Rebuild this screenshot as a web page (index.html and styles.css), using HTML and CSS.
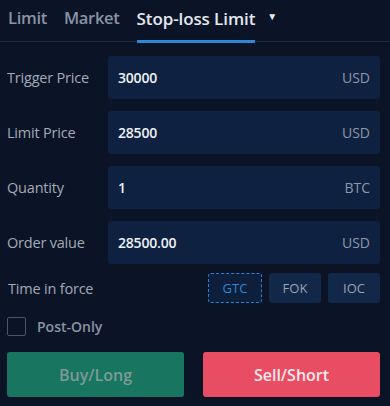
FILE: index.html
```html
<!DOCTYPE html>
<html lang="en">
<head>
    <meta charset="UTF-8">
    <meta name="viewport" content="width=device-width, initial-scale=1.0">
    <title>Stop-loss Limit Order</title>
    <link rel="stylesheet" href="styles.css">
</head>
<body>
    <nav class="tabs">
        <a href="#" class="tab">Limit</a>
        <a href="#" class="tab">Market</a>
        <a href="#" class="tab active">Stop-loss Limit</a>
        <span class="caret">&#9660;</span>
    </nav>

    <form class="order-form">
        <div class="form-row">
            <label>Trigger Price</label>
            <div class="field"><span class="value">30000</span><span class="unit">USD</span></div>
        </div>
        <div class="form-row">
            <label>Limit Price</label>
            <div class="field"><span class="value">28500</span><span class="unit">USD</span></div>
        </div>
        <div class="form-row">
            <label>Quantity</label>
            <div class="field"><span class="value">1</span><span class="unit">BTC</span></div>
        </div>
        <div class="form-row">
            <label>Order value</label>
            <div class="field"><span class="value">28500.00</span><span class="unit">USD</span></div>
        </div>

        <div class="tif-row">
            <span class="tif-label">Time in force</span>
            <div class="tif-options">
                <button type="button" class="tif-btn selected">GTC</button>
                <button type="button" class="tif-btn">FOK</button>
                <button type="button" class="tif-btn">IOC</button>
            </div>
        </div>

        <label class="post-only"><span class="checkbox"></span>Post-Only</label>

        <div class="actions">
            <button type="button" class="btn buy">Buy/Long</button>
            <button type="button" class="btn sell">Sell/Short</button>
        </div>
    </form>
</body>
</html>
```

FILE: styles.css
```css
* {
    margin: 0;
    padding: 0;
    box-sizing: border-box;
    font-family: "Open Sans", "Noto Sans", sans-serif;
}

body {
    background-color: #0b1326;
    color: #a3abb8;
    width: 390px;
    height: 406px;
    overflow: hidden;
}

.tabs {
    display: flex;
    align-items: center;
    gap: 17px;
    height: 42px;
    padding: 0 8px;
    border-bottom: 1px solid #1c2740;
}

.tab {
    display: flex;
    align-items: center;
    height: 42px;
    padding-bottom: 6px;
    color: #8a93a3;
    font-size: 16.5px;
    font-weight: 600;
    text-decoration: none;
    letter-spacing: -0.3px;
}

.tab.active {
    color: #e4e8ee;
    font-size: 17px;
    letter-spacing: -0.1px;
    border-bottom: 3px solid #2f86d6;
    padding-bottom: 3px;
    margin-bottom: -1px;
    height: 43px;
    white-space: nowrap;
}

.caret {
    font-size: 10px;
    color: #e4e8ee;
    margin-left: -5px;
    padding-bottom: 9px;
}

.order-form {
    padding: 14px 10px 0 7px;
}

.form-row {
    display: flex;
    align-items: center;
    margin-bottom: 12px;
}

.form-row label {
    width: 101px;
    font-size: 14.5px;
    font-weight: 500;
    color: #a3abb8;
    letter-spacing: -0.2px;
}

.field {
    flex: 1;
    height: 43px;
    background-color: #0f2140;
    border-radius: 3px;
    display: flex;
    align-items: center;
    justify-content: space-between;
    padding: 0 10px;
}

.value {
    color: #eef1f5;
    font-size: 14px;
    font-weight: 600;
    letter-spacing: -0.2px;
}

.unit {
    color: #8d97a7;
    font-size: 14px;
    font-weight: 500;
}

.tif-row {
    display: flex;
    align-items: center;
    justify-content: space-between;
    margin-top: -3px;
}

.tif-label {
    font-size: 14.5px;
    font-weight: 500;
    padding-left: 1px;
    letter-spacing: -0.2px;
}

.tif-options {
    display: flex;
    gap: 7px;
}

.tif-btn {
    width: 52px;
    height: 30px;
    border: 1px solid transparent;
    border-radius: 3px;
    background-color: #112848;
    color: #9aa3b0;
    font-size: 13px;
    font-weight: 500;
}

.tif-btn.selected {
    width: 54px;
    border: 1px dashed #2a7fd4;
    background-color: #0d1f3a;
    color: #2f86d6;
}

.post-only {
    display: flex;
    align-items: center;
    gap: 11px;
    margin-top: 14px;
    height: 18px;
    font-size: 14px;
    font-weight: 600;
    color: #8a93a3;
}

.checkbox {
    width: 19px;
    height: 19px;
    border: 1px solid #4a5568;
    border-radius: 2px;
}

.actions {
    display: flex;
    justify-content: space-between;
    margin-top: 17px;
}

.btn {
    width: 177px;
    height: 45px;
    border: none;
    border-radius: 3px;
    font-size: 16px;
    font-weight: 600;
}

.btn.buy {
    background-color: #177560;
    color: #7f9a96;
}

.btn.sell {
    background-color: #e84d63;
    color: #f8eaec;
}
```
